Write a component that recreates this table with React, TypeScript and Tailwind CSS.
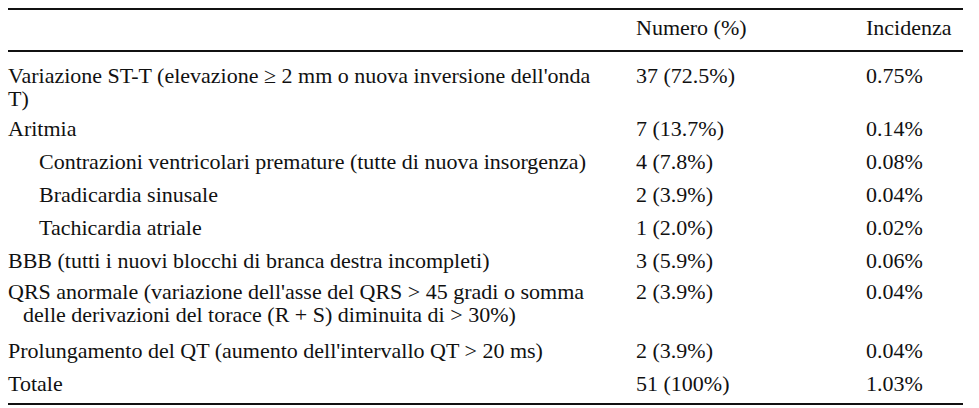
const rows = [
  {
    label: "Variazione ST-T (elevazione ≥ 2 mm o nuova inversione dell'onda T)",
    count: "37 (72.5%)",
    inc: "0.75%",
    pad: "pt-[12px] pb-[2px]",
    indent: "",
  },
  { label: "Aritmia", count: "7 (13.7%)", inc: "0.14%", pad: "py-[5px]", indent: "" },
  {
    label: "Contrazioni ventricolari premature (tutte di nuova insorgenza)",
    count: "4 (7.8%)",
    inc: "0.08%",
    pad: "py-[5px]",
    indent: "pl-[31px]",
  },
  { label: "Bradicardia sinusale", count: "2 (3.9%)", inc: "0.04%", pad: "py-[5px]", indent: "pl-[31px]" },
  { label: "Tachicardia atriale", count: "1 (2.0%)", inc: "0.02%", pad: "py-[5px]", indent: "pl-[31px]" },
  {
    label: "BBB (tutti i nuovi blocchi di branca destra incompleti)",
    count: "3 (5.9%)",
    inc: "0.06%",
    pad: "py-[5px]",
    indent: "",
  },
  {
    label:
      "QRS anormale (variazione dell'asse del QRS > 45 gradi o somma delle derivazioni del torace (R + S) diminuita di > 30%)",
    count: "2 (3.9%)",
    inc: "0.04%",
    pad: "pt-[3px] pb-[8px]",
    indent: "pl-[15px] indent-[-15px]",
  },
  {
    label: "Prolungamento del QT (aumento dell'intervallo QT > 20 ms)",
    count: "2 (3.9%)",
    inc: "0.04%",
    pad: "py-[5px]",
    indent: "",
  },
  { label: "Totale", count: "51 (100%)", inc: "1.03%", pad: "pt-[5px] pb-[8px]", indent: "" },
];

export default function App() {
  return (
    <div className="w-[979px] h-[408px] bg-white pt-2 pl-2 text-[#111] font-[family-name:'Liberation_Serif','Times_New_Roman',serif] text-[22px] leading-[23px]">
      <table className="w-[955px] table-fixed border-separate border-spacing-0">
        <colgroup>
          <col className="w-[628px]" />
          <col className="w-[230px]" />
          <col className="w-[97px]" />
        </colgroup>
        <thead>
          <tr>
            <th className="border-y-2 border-[#111] pt-[6px] pb-[11px]"></th>
            <th className="border-y-2 border-[#111] pt-[6px] pb-[11px] text-left font-normal">Numero (%)</th>
            <th className="border-y-2 border-[#111] pt-[6px] pb-[11px] text-left font-normal">Incidenza</th>
          </tr>
        </thead>
        <tbody>
          {rows.map((r, i) => {
            const last = i === rows.length - 1;
            return (
              <tr key={r.label}>
                <td className={`align-top pr-[20px] ${r.pad} ${r.indent} ${last ? "border-b-2 border-[#111]" : ""}`}>
                  {r.label}
                </td>
                <td className={`align-top ${r.pad} ${last ? "border-b-2 border-[#111]" : ""}`}>{r.count}</td>
                <td className={`align-top ${r.pad} ${last ? "border-b-2 border-[#111]" : ""}`}>{r.inc}</td>
              </tr>
            );
          })}
        </tbody>
      </table>
    </div>
  );
}
